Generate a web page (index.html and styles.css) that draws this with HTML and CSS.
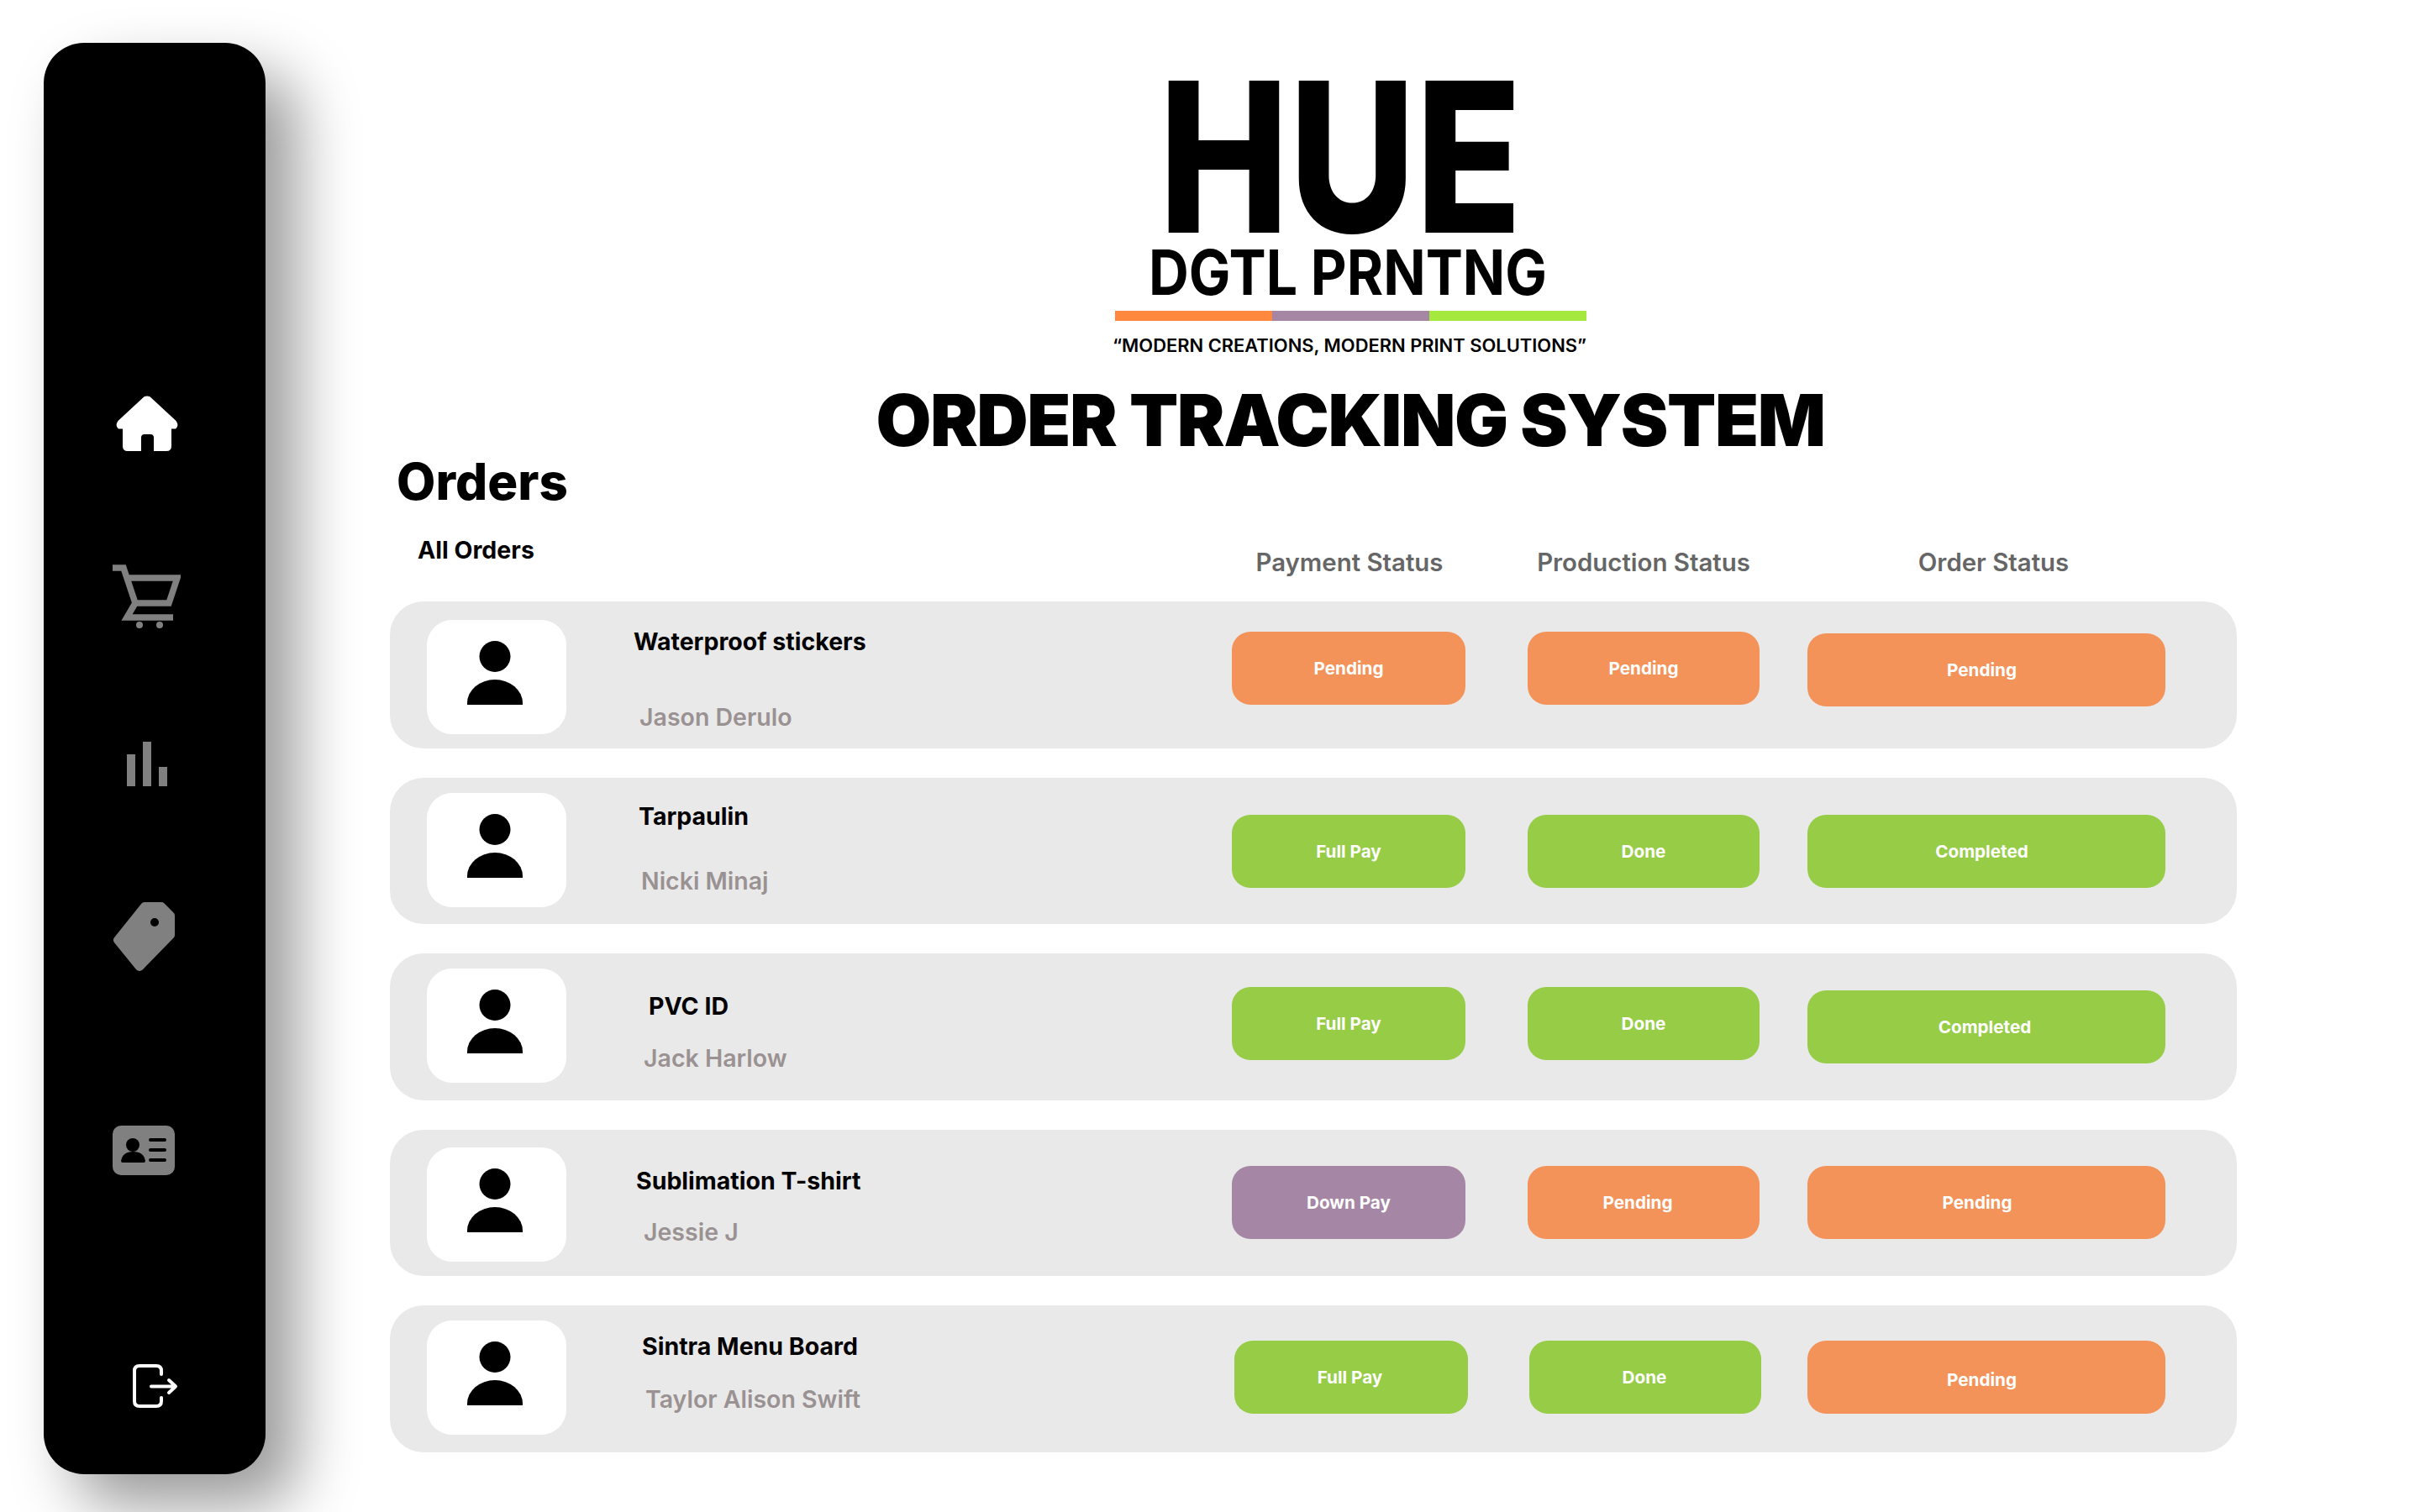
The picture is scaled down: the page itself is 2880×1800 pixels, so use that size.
FILE: index.html
```html
<!DOCTYPE html>
<html lang="en">
<head>
    <meta charset="UTF-8">
    <title>Order Tracking System</title>
    <link rel="stylesheet" href="styles.css">
</head>
<body>
    <aside class="sidebar">
        <svg class="nav-icon nav-home" viewBox="0 0 74 67"><path class="fill-white" d="M33.5 1.2 Q37 -.4 40.5 1.2 L71.5 30 Q75.5 36 71 39.5 H66 V60 Q66 66 60 66 H45 V50 Q45 46 41 46 H34 Q30 46 30 50 V66 H14 Q8 66 8 60 V39.5 H3 Q-1.5 36 2.5 30 Z"/></svg>
        <svg class="nav-icon nav-cart" viewBox="0 0 81 76"><path class="line-gray" d="M0 4 H13 L27 46 H67 L77 16 H16 M27 46 L17 63 H72"/><circle class="fill-gray" cx="32" cy="72" r="4"/><circle class="fill-gray" cx="56" cy="72" r="4"/></svg>
        <svg class="nav-icon nav-bars" viewBox="0 0 48 53"><rect class="fill-gray" x="0" y="15" width="10" height="38"/><rect class="fill-gray" x="19" y="0" width="10" height="53"/><rect class="fill-gray" x="38" y="30" width="10" height="23"/></svg>
        <svg class="nav-icon nav-tag" viewBox="0 0 74 83"><path class="fill-gray tag-shape" d="M6 46 L38 6 H58 L69 17 V40 L32 78 Z"/><circle class="fill-black" cx="50" cy="25" r="5"/></svg>
        <svg class="nav-icon nav-card" viewBox="0 0 74 59"><rect class="fill-gray" width="74" height="59" rx="10"/><circle class="fill-black" cx="24" cy="23" r="8"/><path class="fill-black" d="M10 42 Q12 31 24.500 31 Q37 31 39 42 Q39 44 37 44 H12 Q10 44 10 42 Z"/><path class="line-black" d="M45 17 H62 M45 29 H62 M45 41 H62"/></svg>
        <svg class="nav-icon nav-logout" viewBox="0 0 54 52"><path class="line-white" d="M34 12 V8 Q34 2 28 2 H8 Q2 2 2 8 V44 Q2 50 8 50 H28 Q34 50 34 44 V40 M22 26.500 H50 M43 19 L51 26.500 L43 34"/></svg>
    </aside>

    <main class="content">
        <header class="brand">
            <svg class="logo" viewBox="0 0 561 328">
                <text class="logo-hue" x="52" y="181" textLength="432" lengthAdjust="spacingAndGlyphs">HUE</text>
                <text class="logo-sub" x="40" y="255" textLength="474" lengthAdjust="spacingAndGlyphs">DGTL PRNTNG</text>
                <rect class="bar-orange" x="0" y="274" width="187" height="12"/>
                <rect class="bar-purple" x="187" y="274" width="187" height="12"/>
                <rect class="bar-green" x="374" y="274" width="187" height="12"/>
                <text class="logo-tag" x="-3" y="323" textLength="564" lengthAdjust="spacingAndGlyphs">“MODERN CREATIONS, MODERN PRINT SOLUTIONS”</text>
            </svg>
            <h1 class="page-title">ORDER TRACKING SYSTEM</h1>
        </header>

        <h2 class="orders-title">Orders</h2>

        <div class="list-head">
            <div class="tab">All Orders</div>
            <div class="col-label col-pay">Payment Status</div>
            <div class="col-label col-prod">Production Status</div>
            <div class="col-label col-order">Order Status</div>
        </div>

        <div class="orders">
            <div class="row row-1">
                <div class="avatar"><svg class="person" viewBox="0 0 66 76"><circle cx="33" cy="18.500" r="18.500"/><path d="M0 76 V74 A33 28 0 0 1 66 74 V76 Z"/></svg></div>
                <div class="info">
                    <div class="item">Waterproof stickers</div>
                    <div class="client">Jason Derulo</div>
                </div>
                <div class="cell-pay"><div class="pill pill-pay orange">Pending</div></div>
                <div class="cell-prod"><div class="pill pill-prod orange">Pending</div></div>
                <div><div class="pill pill-order orange">Pending</div></div>
            </div>

            <div class="row row-2">
                <div class="avatar"><svg class="person" viewBox="0 0 66 76"><circle cx="33" cy="18.500" r="18.500"/><path d="M0 76 V74 A33 28 0 0 1 66 74 V76 Z"/></svg></div>
                <div class="info">
                    <div class="item">Tarpaulin</div>
                    <div class="client">Nicki Minaj</div>
                </div>
                <div class="cell-pay"><div class="pill pill-pay green">Full Pay</div></div>
                <div class="cell-prod"><div class="pill pill-prod green">Done</div></div>
                <div><div class="pill pill-order green">Completed</div></div>
            </div>

            <div class="row row-3">
                <div class="avatar"><svg class="person" viewBox="0 0 66 76"><circle cx="33" cy="18.500" r="18.500"/><path d="M0 76 V74 A33 28 0 0 1 66 74 V76 Z"/></svg></div>
                <div class="info">
                    <div class="item">PVC ID</div>
                    <div class="client">Jack Harlow</div>
                </div>
                <div class="cell-pay"><div class="pill pill-pay green">Full Pay</div></div>
                <div class="cell-prod"><div class="pill pill-prod green">Done</div></div>
                <div><div class="pill pill-order green">Completed</div></div>
            </div>

            <div class="row row-4">
                <div class="avatar"><svg class="person" viewBox="0 0 66 76"><circle cx="33" cy="18.500" r="18.500"/><path d="M0 76 V74 A33 28 0 0 1 66 74 V76 Z"/></svg></div>
                <div class="info">
                    <div class="item">Sublimation T-shirt</div>
                    <div class="client">Jessie J</div>
                </div>
                <div class="cell-pay"><div class="pill pill-pay purple">Down Pay</div></div>
                <div class="cell-prod"><div class="pill pill-prod orange">Pending</div></div>
                <div><div class="pill pill-order orange">Pending</div></div>
            </div>

            <div class="row row-5">
                <div class="avatar"><svg class="person" viewBox="0 0 66 76"><circle cx="33" cy="18.500" r="18.500"/><path d="M0 76 V74 A33 28 0 0 1 66 74 V76 Z"/></svg></div>
                <div class="info">
                    <div class="item">Sintra Menu Board</div>
                    <div class="client">Taylor Alison Swift</div>
                </div>
                <div class="cell-pay"><div class="pill pill-pay green">Full Pay</div></div>
                <div class="cell-prod"><div class="pill pill-prod green">Done</div></div>
                <div><div class="pill pill-order orange">Pending</div></div>
            </div>
        </div>
    </main>
</body>
</html>
```

FILE: styles.css
```css
/* Page */
body {
    margin: 0;
    height: 1800px;
    overflow: hidden;
    display: flex;
    align-items: flex-start;
    background-color: #fff;
    color: #000;
    font-family: Inter, "Liberation Sans", sans-serif;
}

/* Sidebar */
.sidebar {
    flex: none;
    width: 264px;
    height: 1704px;
    margin: 51px 0 0 52px;
    border-radius: 48px;
    background-color: #000;
    box-shadow: 37px 37px 72px rgba(0, 0, 0, 0.4);
    display: flex;
    flex-direction: column;
}

.nav-icon { display: block; flex: none; }
.nav-home { width: 74px; height: 67px; margin: 420px 0 0 86px; }
.nav-cart { width: 81px; height: 76px; margin: 134px 0 0 82px; }
.nav-bars { width: 48px; height: 53px; margin: 135px 0 0 99px; }
.nav-tag { width: 74px; height: 83px; margin: 137px 0 0 82px; }
.nav-card { width: 74px; height: 59px; margin: 184px 0 0 82px; }
.nav-logout { width: 54px; height: 52px; margin: 225px 0 0 106px; }

.fill-white { fill: #fff; }
.fill-gray { fill: #808080; }
.fill-black { fill: #000; }
.tag-shape { stroke: #808080; stroke-width: 10; stroke-linejoin: round; }
.line-gray { fill: none; stroke: #808080; stroke-width: 7.500; }
.line-black { fill: none; stroke: #000; stroke-width: 4; stroke-linecap: round; }
.line-white { fill: none; stroke: #fff; stroke-width: 4; stroke-linecap: round; stroke-linejoin: round; }

/* Main column */
.content {
    flex: none;
    width: 2198px;
    margin-left: 148px;
    padding-top: 96px;
}

/* Logo and title */
.brand {
    width: 2286px;
    display: flex;
    flex-direction: column;
    align-items: center;
}

.logo { display: block; width: 561px; height: 328px; overflow: visible; }
.logo-hue { font-size: 249px; font-weight: 800; }
.logo-sub { font-size: 74px; font-weight: 700; }
.logo-tag { font-size: 21px; font-weight: 600; }
.bar-orange { fill: #ff883e; }
.bar-purple { fill: #a586a4; }
.bar-green { fill: #a6e93e; }

.page-title {
    margin: 34px 0 0;
    font-size: 85px;
    line-height: 85px;
    font-weight: 900;
    letter-spacing: -1.400px;
    white-space: nowrap;
}

.orders-title {
    margin: 0 0 0 8px;
    font-size: 60px;
    line-height: 60px;
    font-weight: 800;
}

/* Column headings */
.list-head {
    height: 113px;
    display: flex;
    align-items: flex-start;
}

.tab {
    width: 969px;
    margin: 36px 0 0 33px;
    font-size: 28.500px;
    line-height: 32px;
    font-weight: 700;
}

.col-label {
    margin-top: 51px;
    font-size: 29.400px;
    line-height: 32px;
    font-weight: 600;
    color: #666;
    text-align: center;
    white-space: nowrap;
}

.col-pay { width: 352px; padding-right: 72px; box-sizing: border-box; }
.col-prod { width: 333px; padding-right: 57px; box-sizing: border-box; }
.col-order { width: 425px; padding-left: 18px; box-sizing: border-box; }

/* Order rows */
.orders {
    display: flex;
    flex-direction: column;
    gap: 35px;
}

.row {
    height: 174.500px;
    padding-left: 44px;
    box-sizing: border-box;
    border-radius: 40px;
    background-color: #e9e9e9;
    display: grid;
    grid-template-columns: 166px 792px 352px 333px 426px;
    align-items: start;
}

.avatar {
    height: 136px;
    margin-top: var(--avatar-top);
    padding: 0 4px 10px 0;
    box-sizing: border-box;
    border-radius: 30px;
    background-color: #fff;
    display: flex;
    align-items: center;
    justify-content: center;
}

.person { width: 66px; height: 76px; fill: #000; }

.item, .client {
    font-size: 28.500px;
    line-height: 32px;
    white-space: nowrap;
}

.item {
    margin: var(--item-top) 0 0 var(--item-left);
    font-weight: 700;
}

.client {
    margin: var(--client-gap) 0 0 var(--client-left);
    font-weight: 600;
    color: #9a9292;
}

/* Status pills */
.pill {
    height: 87px;
    box-sizing: border-box;
    border-radius: 22px;
    color: #fff;
    font-size: 20.700px;
    font-weight: 700;
    display: flex;
    align-items: center;
    justify-content: center;
}

.pill-pay { width: 278px; margin: var(--pay-top) 0 0 var(--pay-left, 0); padding-right: var(--pay-pad, 0); }
.pill-prod { width: 276px; margin: var(--pay-top) 0 0 var(--prod-left, 0); padding-right: var(--prod-pad, 0); }
.pill-order { width: 426px; margin-top: var(--order-top); padding: var(--order-shift, 0) var(--order-pad, 11px) 0 0; }

.orange { background-color: #f39359; }
.green { background-color: #96cc46; }
.purple { background-color: #a586a4; }

/* The rows were not laid out on one grid: each keeps its own offsets */
.row-1 { --avatar-top: 22px; --item-top: 32px; --item-left: 80px; --client-gap: 58px; --client-left: 87px; --pay-top: 36px; --order-top: 38px; --order-shift: 0; }
.row-2 { --avatar-top: 18px; --item-top: 30px; --item-left: 86px; --client-gap: 45px; --client-left: 89px; --pay-top: 44px; --order-top: 44px; }
.row-3 { --avatar-top: 18px; --item-top: 47px; --item-left: 98px; --client-gap: 30px; --client-left: 92px; --pay-top: 40px; --order-top: 44px; --order-pad: 4px; }
.row-4 { --avatar-top: 21px; --item-top: 45px; --item-left: 83px; --client-gap: 29px; --client-left: 92px; --pay-top: 43px; --order-top: 43px; --order-pad: 22px; --prod-pad: 14px; }
.row-5 { --avatar-top: 18px; --item-top: 33px; --item-left: 90px; --client-gap: 31px; --client-left: 94px; --pay-top: 42px; --order-top: 42px; --pay-left: 3px; --prod-left: 2px; --pay-pad: 3px; --prod-pad: 2px; --order-shift: 5px; }
```
